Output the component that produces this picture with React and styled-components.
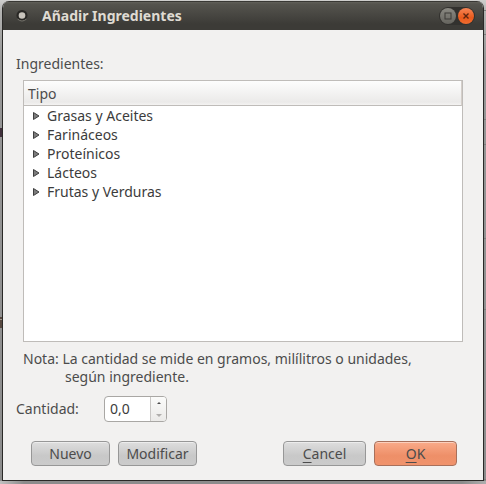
import React, { useState } from "react";
import styled, { createGlobalStyle } from "styled-components";

const GlobalStyle = createGlobalStyle`
  *, *::before, *::after { box-sizing: border-box; }
  body { margin: 0; }
  body, button, input {
    font-family: "Noto Sans", "Open Sans", sans-serif;
    font-size: 14px;
    line-height: 18px;
    color: #4c4c4c;
  }
`;

const edgeLines = [10, 34, 119, 144, 238, 309, 479]
  .map((y) => `linear-gradient(#7d7d7b, #7d7d7b) right 0 top ${y}px / 2px 1px no-repeat`)
  .join(", ");

const Desktop = styled.div`
  display: flex;
  flex-direction: column;
  min-height: 100vh;
  padding: 1px 2px 3px;
  background:
    ${edgeLines},
    linear-gradient(#40303c, #40303c) 0 128px / 2px 9px no-repeat,
    linear-gradient(#574840 2px, #a39a92 2px, #a39a92 3px, #574840 3px) 0 317px / 2px 11px no-repeat,
    linear-gradient(90deg, rgba(255,255,255,0.45), transparent 24px calc(100% - 24px), rgba(255,255,255,0.3)) bottom / 100% 3px no-repeat,
    linear-gradient(#cfcfcd, #b3b3b1 12px, #979797 60px, #8c8c8c);
`;

const Dialog = styled.main`
  flex: 1;
  display: flex;
  flex-direction: column;
  border: 1px solid #2a2927;
  border-top: 0;
  border-radius: 7px 7px 0 0;
  background: #f2f1f0;
  overflow: hidden;
`;

const TitleBar = styled.header`
  display: flex;
  align-items: center;
  height: 29px;
  padding: 0 8px 0 12px;
  border-top: 1px solid #393834;
  background: linear-gradient(#62615a, #55544e 2px, #3c3b37 22px, #3c3b37);
`;

const Title = styled.h1`
  flex: 1;
  margin: 0 0 0 13px;
  font-size: 14px;
  font-weight: 700;
  line-height: 18px;
  color: #dfdbd2;
`;

const Controls = styled.div`
  display: flex;
  gap: 2px;
  padding: 1px;
  border-radius: 10px;
  background: #32312e;
`;

const ControlButton = styled.button`
  display: flex;
  width: 16px;
  height: 16px;
  padding: 0;
  border: 0;
  border-radius: 50%;
  background: ${(p) => (p.$close ? "linear-gradient(#f58657, #ea5a1c 60%, #ee6c30)" : "linear-gradient(#8a8982, #65645e)")};
`;

const Body = styled.div`
  flex: 1;
  display: flex;
  flex-direction: column;
  padding: 25px 20px 14px 13px;
`;

const Label = styled.label`
  width: ${(p) => (p.$fixed ? "88px" : "auto")};
`;

const Tree = styled.section`
  flex: 1;
  margin: 7px 0 8px 7px;
  border: 1px solid #bfbcb9;
  background: #fff;
`;

const ColumnHeader = styled.div`
  height: 25px;
  padding: 4px;
  border-right: 1px solid #d5cfca;
  border-bottom: 1px solid #bfbcb9;
  background: linear-gradient(#fdfdfd, #ebeae9 21px, #f4f3f2);
`;

const Rows = styled.ul`
  margin: 0;
  padding: 0;
  list-style: none;
`;

const RowButton = styled.button`
  display: flex;
  align-items: center;
  width: 100%;
  height: 19px;
  gap: 7px;
  padding: 0 9px;
  border: 0;
  background: none;
  color: #3c3c3c;
  text-align: left;
`;

const Note = styled.p`
  margin: 0 0 10px 7px;
  padding-left: 42px;
  text-indent: -42px;
`;

const NoteLine = styled.span`
  white-space: nowrap;
`;

const Field = styled.div`
  display: flex;
  align-items: center;
`;

const Spin = styled.div`
  display: flex;
  width: 63px;
  height: 26px;
  border: 1px solid #a9a7a4;
  border-radius: 4px;
  background: #fff;
  overflow: hidden;
`;

const SpinInput = styled.input`
  flex: 1;
  min-width: 0;
  padding: 0 5px;
  border: 0;
  outline: 0;
  background: transparent;
  color: #3c3c3c;
`;

const Steps = styled.div`
  display: flex;
  flex-direction: column;
  width: 16px;
  border-left: 1px solid #c9c7c5;
  background: linear-gradient(#fbfbfa, #ebeae8);
`;

const StepButton = styled.button`
  flex: 1;
  display: flex;
  align-items: center;
  justify-content: center;
  padding: 0;
  border: 0;
  background: none;
`;

const Actions = styled.div`
  display: flex;
  gap: 8px;
  margin-top: 19px;
  padding: 0 6px 0 15px;
`;

const Spacer = styled.div`
  flex: 1;
`;

const ActionButton = styled.button`
  width: ${(p) => (p.$wide ? 83 : 79)}px;
  height: 25px;
  padding: 0;
  border: 1px solid ${(p) => (p.$primary ? "#a8705b" : "#979797")};
  border-radius: 4px;
  background: ${(p) => (p.$primary ? "linear-gradient(#f9ab8a, #ee8f68 60%, #f0936c)" : "linear-gradient(#dedede, #c8c8c8 60%, #cbcbcb)")};
  box-shadow: inset 0 1px 0 rgba(255, 255, 255, 0.45);
`;

const Mnemonic = styled.span`
  text-decoration: underline;
  text-underline-offset: 3px;
`;

const GROUPS = ["Grasas y Aceites", "Farináceos", "Proteínicos", "Lácteos", "Frutas y Verduras"];

function MenuDot() {
  return (
    <svg width="14" height="14" viewBox="0 0 14 14" aria-hidden="true">
      <circle cx="7" cy="6.5" r="5.5" fill="#292825" />
      <path d="M2.5 10 Q7 14 11.5 10" fill="none" stroke="#77756e" />
      <circle cx="7" cy="6.5" r="3.3" fill="#c8c4bc" />
    </svg>
  );
}

export default function App() {
  const [amount, setAmount] = useState("0,0");
  const step = (delta) => {
    const next = Math.max(0, (parseFloat(amount.replace(",", ".")) || 0) + delta);
    setAmount(next.toFixed(1).replace(".", ","));
  };
  return (
    <>
      <GlobalStyle />
      <Desktop>
        <Dialog>
          <TitleBar>
            <MenuDot />
            <Title>Añadir Ingredientes</Title>
            <Controls>
              <ControlButton type="button" aria-label="Maximizar">
                <svg width="16" height="16" viewBox="0 0 16 16">
                  <rect x="5" y="5" width="6" height="6" fill="none" stroke="#3c3b37" />
                </svg>
              </ControlButton>
              <ControlButton type="button" $close aria-label="Cerrar">
                <svg width="16" height="16" viewBox="0 0 16 16">
                  <path d="M5.5 5.5 L10.5 10.5 M10.5 5.5 L5.5 10.5" stroke="#5b2510" strokeWidth="1.4" />
                </svg>
              </ControlButton>
            </Controls>
          </TitleBar>
          <Body>
            <Label as="div" id="tree-label">Ingredientes:</Label>
            <Tree aria-labelledby="tree-label">
              <ColumnHeader>Tipo</ColumnHeader>
              <Rows>
                {GROUPS.map((name) => (
                  <li key={name}>
                    <RowButton type="button" aria-expanded="false">
                      <svg width="7" height="8" viewBox="0 0 7 8" aria-hidden="true">
                        <path d="M0.5 0.5 L6 4 L0.5 7.5 Z" fill="#7c7c7c" stroke="#3f3f3f" />
                      </svg>
                      {name}
                    </RowButton>
                  </li>
                ))}
              </Rows>
            </Tree>
            <Note>
              Nota: La cantidad se mide en gramos, milílitros o unidades,
              <br />
              <NoteLine>según ingrediente.</NoteLine>
            </Note>
            <Field>
              <Label $fixed htmlFor="amount">Cantidad:</Label>
              <Spin>
                <SpinInput id="amount" value={amount} onChange={(e) => setAmount(e.target.value)} />
                <Steps>
                  <StepButton type="button" aria-label="Aumentar" onClick={() => step(1)}>
                    <svg width="4" height="2" viewBox="0 0 4 2"><path d="M0 2 L2 0 L4 2 Z" fill="#4c4c4c" /></svg>
                  </StepButton>
                  <StepButton type="button" aria-label="Reducir" onClick={() => step(-1)}>
                    <svg width="6" height="3" viewBox="0 0 6 3"><path d="M0 0 L6 0 L3 3 Z" fill="#b0aeac" /></svg>
                  </StepButton>
                </Steps>
              </Spin>
            </Field>
            <Actions>
              <ActionButton type="button">Nuevo</ActionButton>
              <ActionButton type="button">Modificar</ActionButton>
              <Spacer />
              <ActionButton type="button" $wide><Mnemonic>C</Mnemonic>ancel</ActionButton>
              <ActionButton type="button" $wide $primary><Mnemonic>O</Mnemonic>K</ActionButton>
            </Actions>
          </Body>
        </Dialog>
      </Desktop>
    </>
  );
}
